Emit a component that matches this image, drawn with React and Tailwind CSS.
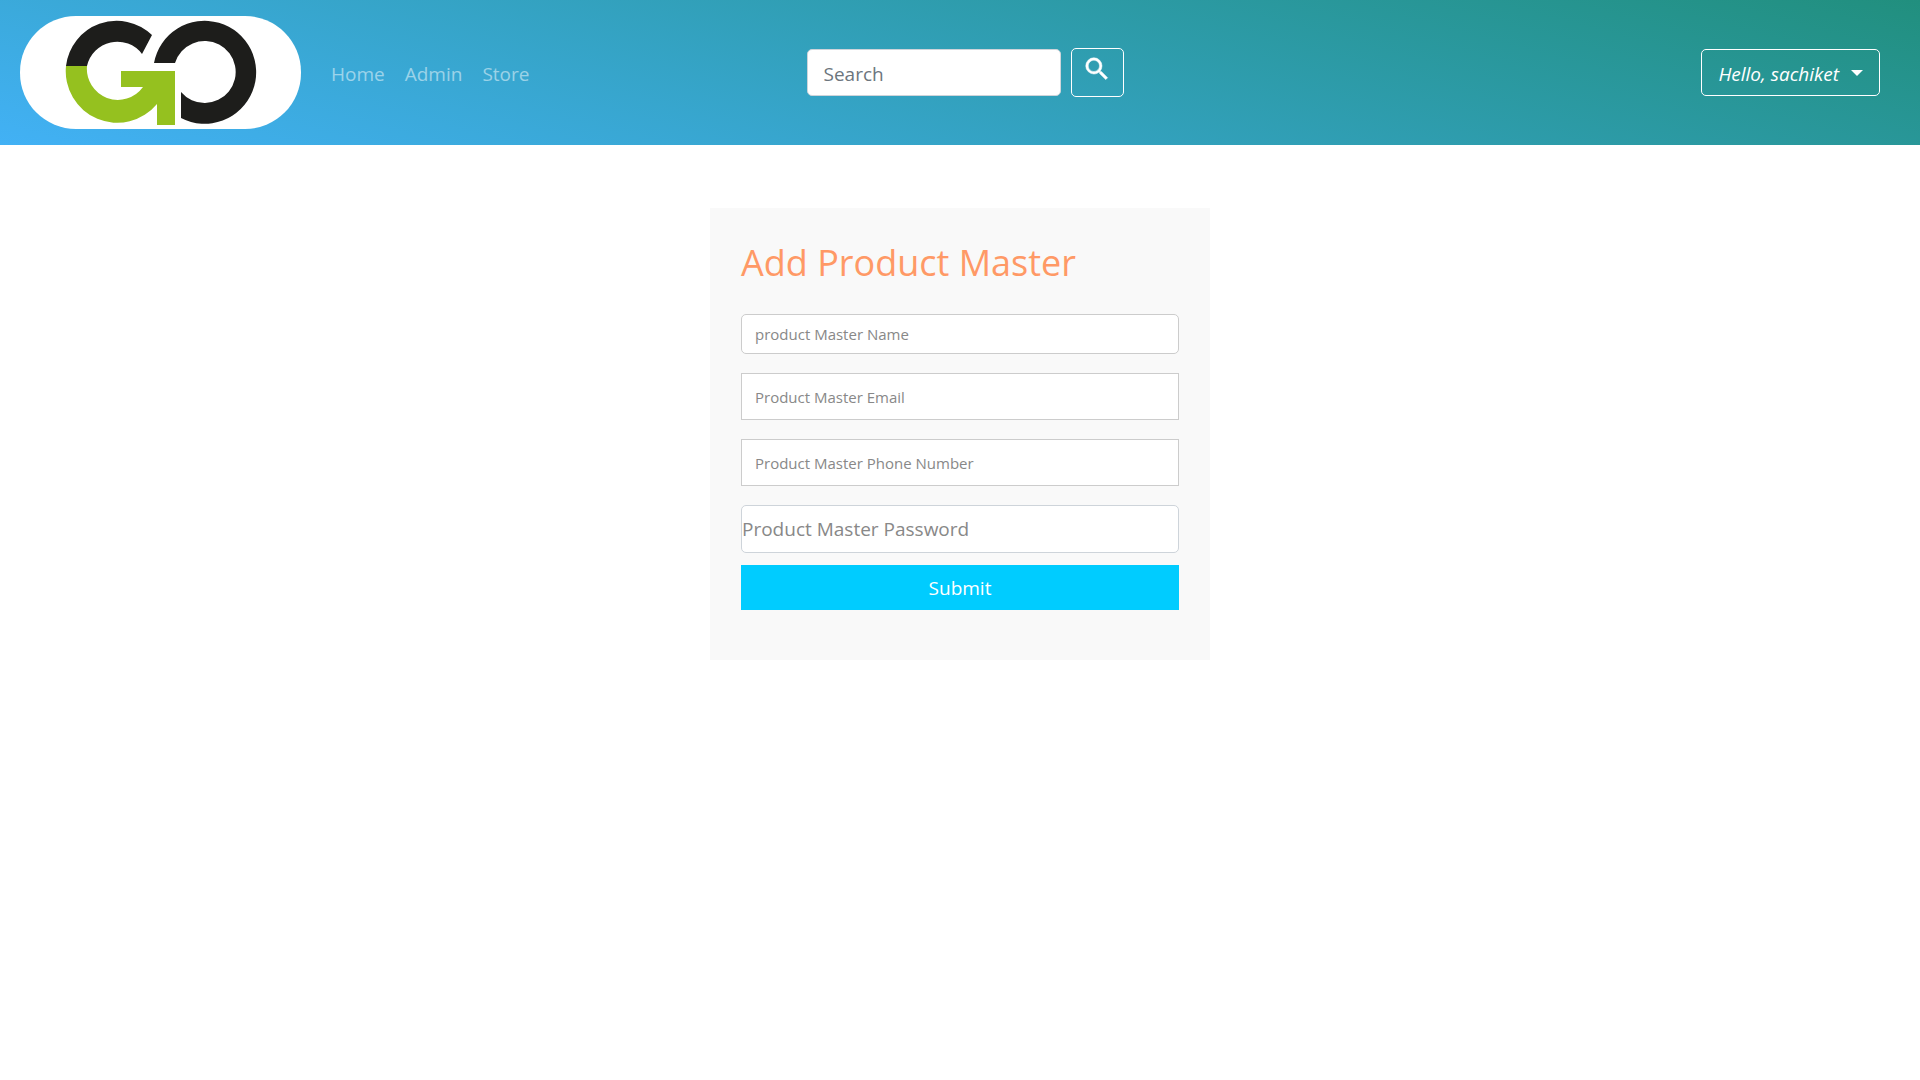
import React from "react";

function Logo() {
  return (
    <svg viewBox="0 0 281 113" className="h-[113px] w-[281px]" role="img" aria-label="GO">
      <rect width="281" height="113" rx="56" fill="#fff" />
      <path d="M46 50A51 51 0 0 1 132 19L122 38A31 31 0 0 0 67 50Z" fill="#1d1d1b" />
      <path d="M46 50H67A31 31 0 0 0 123 71H101V55H155V109H137V88A51.500 51.500 0 0 1 46 50Z" fill="#95c11f" />
      <path d="M134 47A51.500 51.500 0 1 1 161 102V76A31 31 0 1 0 155 47Z" fill="#1d1d1b" />
    </svg>
  );
}

const links = ["Home", "Admin", "Store"];

const small = "h-10 rounded-[5px] border-[#ccc] px-[13px] text-[15px]";
const square = "h-[47px] border-[#ccc] px-[13px] text-[15px]";
const large = "h-12 rounded-[5px] border-[#ced4da] text-[19px]";

const fields = [
  { label: "product Master Name", type: "text", style: small },
  { label: "Product Master Email", type: "email", style: square },
  { label: "Product Master Phone Number", type: "tel", style: square },
  { label: "Product Master Password", type: "password", style: large },
];

export default function App() {
  return (
    <div className="min-h-screen bg-white font-['Open_Sans','Noto_Sans',sans-serif]">
      <header className="flex items-center justify-between bg-[linear-gradient(15deg,#42b1f5,#218f7e)] py-4 pr-10 pl-5">
        <div className="flex flex-1 items-center gap-[30px]">
          <a href="#home">
            <Logo />
          </a>
          <nav className="flex gap-5 pt-1 text-[19px] text-white/50">
            {links.map((l) => (
              <a key={l} href={"#" + l.toLowerCase()}>{l}</a>
            ))}
          </nav>
        </div>
        <form className="ml-[30px] flex items-center gap-2.5">
          <input
            type="search"
            aria-label="Search"
            placeholder="Search"
            className="h-[47px] w-[254px] rounded-[5px] border border-[#ced4da] bg-white px-4 pt-0.5 text-[19px] placeholder:text-[#6c757d]"
          />
          <button
            type="button"
            aria-label="Submit search"
            className="flex h-[49px] w-[53px] justify-center rounded-[5px] border border-white pt-[5px] text-white"
          >
            <svg viewBox="0 0 24 24" className="size-[30px]" fill="currentColor" stroke="currentColor" strokeWidth="0.400">
              <path d="M15.500 14h-.79l-.28-.27A6.470 6.470 0 0 0 16 9.500 6.500 6.500 0 1 0 9.500 16c1.610 0 3.090-.59 4.230-1.570l.27.28v.79l5 4.990L20.490 19l-4.990-5zm-6 0C7.010 14 5 11.990 5 9.500S7.010 5 9.500 5 14 7.010 14 9.500 11.990 14 9.500 14z" />
            </svg>
          </button>
        </form>
        <div className="flex flex-1 justify-end">
          <button
            type="button"
            className="flex h-[47px] items-center gap-3 rounded-[5px] border border-white px-4 text-[19px] text-white italic"
          >
            <span className="pt-1">Hello, sachiket</span>
            <svg viewBox="0 0 12 6" className="h-1.5 w-3" fill="currentColor">
              <path d="M0 0h12L6 6z" />
            </svg>
          </button>
        </div>
      </header>
      <main className="flex justify-center pt-[63px]">
        <form className="flex w-[500px] flex-col bg-[#f9f9f9] px-[31px] pt-[31px] pb-[50px]">
          <h1 className="mb-[27px] text-4xl leading-[48px] text-[#ff9966]">Add Product Master</h1>
          <div className="flex flex-col gap-[19px]">
            {fields.map((f) => (
              <input
                key={f.label}
                type={f.type}
                aria-label={f.label}
                placeholder={f.label}
                className={"w-full border bg-white placeholder:text-[#888] " + f.style}
              />
            ))}
          </div>
          <button type="button" className="mt-3 h-[45px] bg-[#00ccff] pt-0.5 text-[19px] text-white">
            Submit
          </button>
        </form>
      </main>
    </div>
  );
}
